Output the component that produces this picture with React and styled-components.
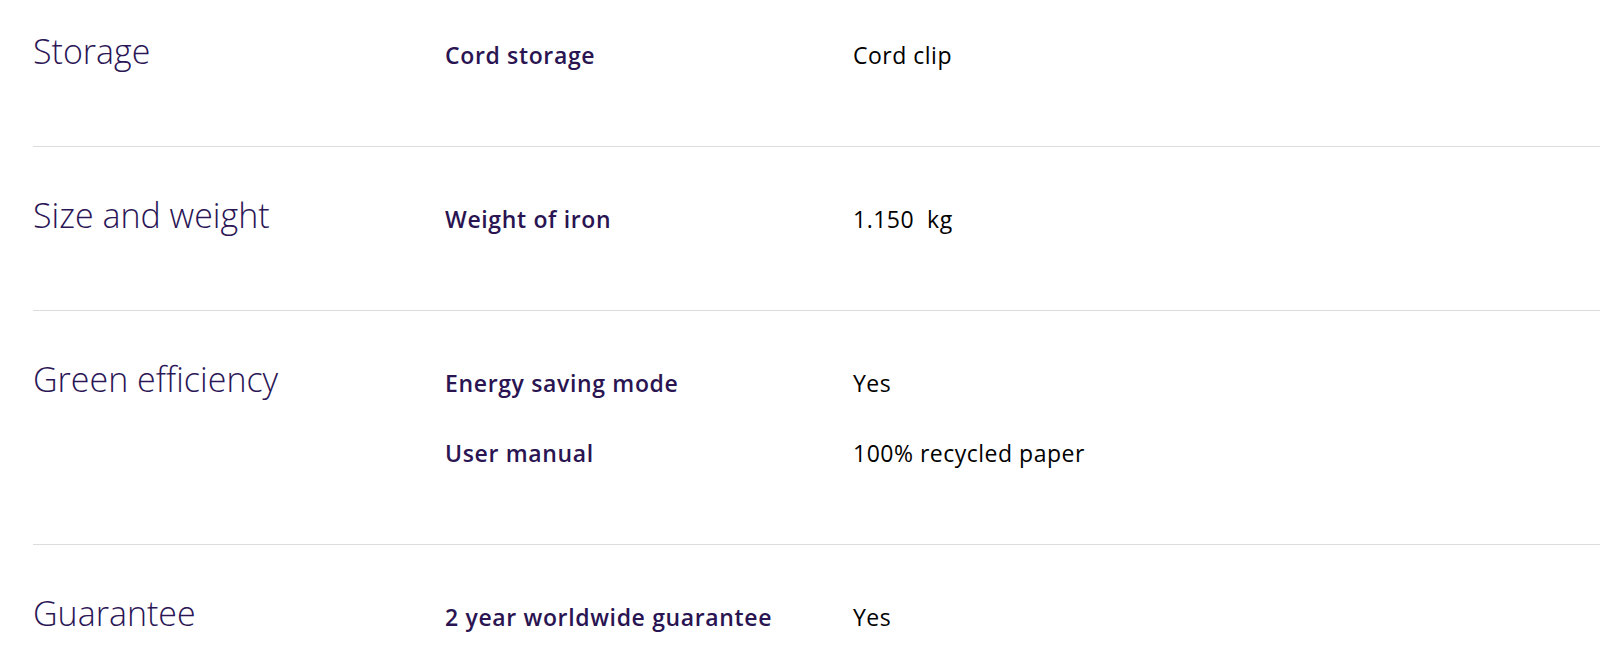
import React from "react";
import styled, { createGlobalStyle } from "styled-components";

const GlobalStyle = createGlobalStyle`
  body {
    margin: 0;
    background: #ffffff;
    font-family: "Open Sans", "Noto Sans", sans-serif;
  }
`;

const SpecList = styled.div`
  padding-left: 33px;
  overflow: hidden;
  height: 653px;
`;

const Section = styled.section`
  display: grid;
  grid-template-columns: 412px 408px 1fr;
  align-items: baseline;
  padding: 51px 0 77px;
  border-bottom: 1px solid #dcdcdc;

  &:first-child {
    padding-top: 34px;
  }

  &:last-child {
    border-bottom: none;
  }
`;

const SectionTitle = styled.h3`
  margin: 0;
  font-size: 34px;
  line-height: 34px;
  font-weight: 300;
  color: #2b1656;
`;

const Rows = styled.dl`
  grid-column: 2 / 4;
  display: grid;
  grid-template-columns: 408px 1fr;
  row-gap: 42px;
  margin: 0;
`;

const Label = styled.dt`
  font-size: 23px;
  line-height: 28px;
  font-weight: 600;
  letter-spacing: 0.65px;
  color: #2a1452;
`;

const Value = styled.dd`
  margin: 0;
  font-size: 23px;
  line-height: 28px;
  letter-spacing: 0.5px;
  color: #000000;
  white-space: pre;
`;

const specs = [
  { title: "Storage", rows: [["Cord storage", "Cord clip"]] },
  { title: "Size and weight", rows: [["Weight of iron", "1.150  kg"]] },
  {
    title: "Green efficiency",
    rows: [
      ["Energy saving mode", "Yes"],
      ["User manual", "100% recycled paper"],
    ],
  },
  { title: "Guarantee", rows: [["2 year worldwide guarantee", "Yes"]] },
];

export default function App() {
  return (
    <>
      <GlobalStyle />
      <SpecList>
        {specs.map(section => (
          <Section key={section.title}>
            <SectionTitle>{section.title}</SectionTitle>
            <Rows>
              {section.rows.map(([label, value]) => (
                <React.Fragment key={label}>
                  <Label>{label}</Label>
                  <Value>{value}</Value>
                </React.Fragment>
              ))}
            </Rows>
          </Section>
        ))}
      </SpecList>
    </>
  );
}
